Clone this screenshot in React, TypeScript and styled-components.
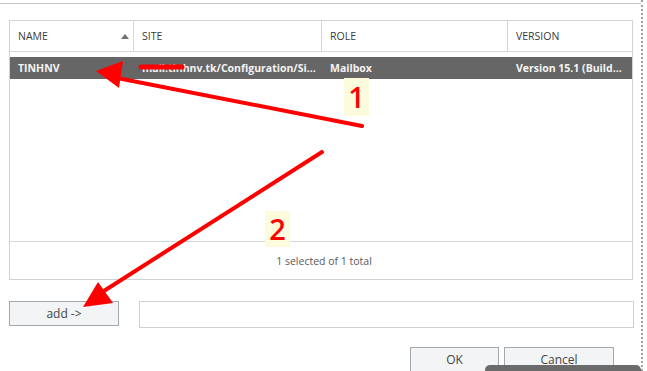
import * as React from 'react';
import styled, { createGlobalStyle } from 'styled-components';

const GlobalStyle = createGlobalStyle`
  html, body {
    margin: 0;
    padding: 0;
    background: #ffffff;
  }
  body {
    font-family: "Open Sans", "Noto Sans", "Liberation Sans", sans-serif;
    color: #333;
  }
`;

const Frame = styled.div`
  position: relative;
  width: 643px;
  height: 371px;
  padding-top: 3px;
  box-sizing: border-box;
  border-right: 2px dotted #a0a0a0;
  overflow: hidden;
`;

const Content = styled.div`
  border-top: 1px solid #c4c7cb;
  padding: 16px 0 0 9px;
  display: flex;
  flex-direction: column;
`;

const Table = styled.div`
  width: 624px;
  height: 260px;
  box-sizing: border-box;
  border: 1px solid #cfd3d8;
  display: flex;
  flex-direction: column;
`;

const HeaderRow = styled.div`
  display: grid;
  grid-template-columns: 124px 188px 186px 1fr;
  height: 31px;
  box-sizing: border-box;
  border-bottom: 1px solid #d4d7db;
`;

const HeaderCell = styled.div<{ $last?: boolean }>`
  display: flex;
  align-items: center;
  justify-content: space-between;
  padding: 0 6px 0 8px;
  font-size: 10.5px;
  color: #3a3a3a;
  border-right: ${p => (p.$last ? 'none' : '1px solid #d4d7db')};
`;

const SortArrow = styled.span`
  width: 0;
  height: 0;
  border-left: 4px solid transparent;
  border-right: 4px solid transparent;
  border-bottom: 5px solid #707070;
  margin-right: -2px;
`;

const Body = styled.div`
  flex: 1;
  padding-top: 5px;
`;

const DataRow = styled.div`
  display: grid;
  grid-template-columns: 124px 188px 186px 1fr;
  height: 22px;
  background: #666666;
`;

const DataCell = styled.div`
  display: flex;
  align-items: center;
  padding: 0 7px 0 8px;
  font-size: 10.5px;
  font-weight: 700;
  color: #f4f4f4;
  white-space: nowrap;
  overflow: hidden;
`;

const Footer = styled.div`
  height: 37px;
  border-top: 1px solid #d4d7db;
  display: flex;
  align-items: center;
  justify-content: center;
  padding-left: 6px;
  font-size: 10.5px;
  color: #5a5a5a;
`;

const ActionRow = styled.div`
  display: flex;
  align-items: flex-start;
  gap: 20px;
  margin-top: 21px;
`;

const Button = styled.button<{ $width: number }>`
  width: ${p => p.$width}px;
  height: 25px;
  box-sizing: border-box;
  border: 1px solid #a3a8ad;
  background: #f3f4f5;
  color: #444;
  font-family: "Open Sans", "Noto Sans", sans-serif;
  font-size: 12px;
  padding: 0;
  cursor: pointer;
`;

const TextBox = styled.div`
  width: 495px;
  height: 27px;
  box-sizing: border-box;
  border: 1px solid #cdd0d4;
  background: #fff;
`;

const DialogButtons = styled.div`
  display: flex;
  gap: 5px;
  margin: 19px 0 0 401px;
`;

const Overlay = styled.svg`
  position: absolute;
  left: 0;
  top: 0;
  pointer-events: none;
`;

const Label = styled.div<{ $x: number; $y: number; $h: number }>`
  position: absolute;
  left: ${p => p.$x}px;
  top: ${p => p.$y}px;
  width: 25px;
  height: ${p => p.$h}px;
  background: #fdfbdd;
  color: #ff0000;
  font-family: "Open Sans", "Noto Sans", sans-serif;
  font-size: 29px;
  font-weight: 600;
  line-height: ${p => p.$h}px;
  text-align: center;
`;

const TaskBar = styled.div`
  position: absolute;
  left: 485px;
  top: 365px;
  width: 156px;
  height: 10px;
  background: #6b6b6b;
  border-radius: 5px 5px 0 0;
`;

const columns = ['NAME', 'SITE', 'ROLE', 'VERSION'];

export default function App() {
  return (
    <>
      <GlobalStyle />
      <Frame>
        <Content>
          <Table>
            <HeaderRow>
              {columns.map((c, i) => (
                <HeaderCell key={c} $last={i === columns.length - 1}>
                  {c}
                  {i === 0 && <SortArrow />}
                </HeaderCell>
              ))}
            </HeaderRow>
            <Body>
              <DataRow>
                <DataCell>TINHNV</DataCell>
                <DataCell>mail.tinhnv.tk/Configuration/Si...</DataCell>
                <DataCell>Mailbox</DataCell>
                <DataCell>Version 15.1 (Build...</DataCell>
              </DataRow>
            </Body>
            <Footer>1 selected of 1 total</Footer>
          </Table>
          <ActionRow>
            <Button $width={110}>add -&gt;</Button>
            <TextBox />
          </ActionRow>
          <DialogButtons>
            <Button $width={89}>OK</Button>
            <Button $width={110}>Cancel</Button>
          </DialogButtons>
        </Content>
        <Overlay width={643} height={371}>
          <line x1={141} y1={67} x2={182} y2={67} stroke="#ff0000" strokeWidth={5} strokeLinecap="round" />
          <line x1={362} y1={126} x2={112} y2={77} stroke="#ff0000" strokeWidth={4} strokeLinecap="round" />
          <polygon points="96,71 123,61 119,88" fill="#ff0000" />
          <line x1={322} y1={152} x2={96} y2={296} stroke="#ff0000" strokeWidth={4} strokeLinecap="round" />
          <polygon points="83,307 98,282 113,303" fill="#ff0000" />
        </Overlay>
        <Label $x={344} $y={78} $h={38}>1</Label>
        <Label $x={265} $y={211} $h={36}>2</Label>
        <TaskBar />
      </Frame>
    </>
  );
}
